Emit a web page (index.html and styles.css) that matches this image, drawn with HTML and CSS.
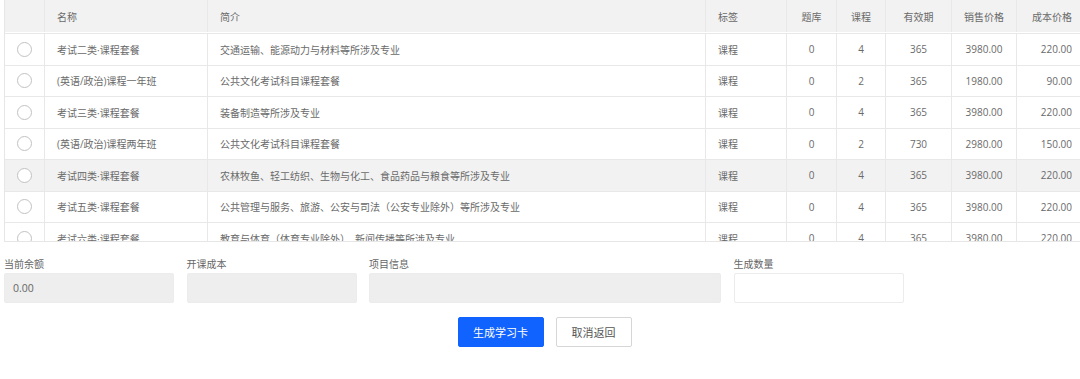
FILE: index.html
```html
<!DOCTYPE html>
<html lang="zh-CN">
<head>
<meta charset="utf-8">
<title>生成学习卡</title>
<link rel="stylesheet" href="styles.css">
</head>
<body>
<div class="page">
  <div class="table">
    <div class="thead">
      <div class="row head">
        <div class="cell"></div>
        <div class="cell">名称</div>
        <div class="cell">简介</div>
        <div class="cell">标签</div>
        <div class="cell c">题库</div>
        <div class="cell c">课程</div>
        <div class="cell c">有效期</div>
        <div class="cell c">销售价格</div>
        <div class="cell r">成本价格</div>
      </div>
    </div>
    <div class="tbody">
      <div class="row">
        <div class="cell c"><span class="radio"></span></div>
        <div class="cell">考试二类·课程套餐</div>
        <div class="cell">交通运输、能源动力与材料等所涉及专业</div>
        <div class="cell">课程</div>
        <div class="cell c">0</div>
        <div class="cell c">4</div>
        <div class="cell c">365</div>
        <div class="cell c">3980.00</div>
        <div class="cell r">220.00</div>
      </div>
      <div class="row">
        <div class="cell c"><span class="radio"></span></div>
        <div class="cell">(英语/政治)课程一年班</div>
        <div class="cell">公共文化考试科目课程套餐</div>
        <div class="cell">课程</div>
        <div class="cell c">0</div>
        <div class="cell c">2</div>
        <div class="cell c">365</div>
        <div class="cell c">1980.00</div>
        <div class="cell r">90.00</div>
      </div>
      <div class="row">
        <div class="cell c"><span class="radio"></span></div>
        <div class="cell">考试三类·课程套餐</div>
        <div class="cell">装备制造等所涉及专业</div>
        <div class="cell">课程</div>
        <div class="cell c">0</div>
        <div class="cell c">4</div>
        <div class="cell c">365</div>
        <div class="cell c">3980.00</div>
        <div class="cell r">220.00</div>
      </div>
      <div class="row">
        <div class="cell c"><span class="radio"></span></div>
        <div class="cell">(英语/政治)课程两年班</div>
        <div class="cell">公共文化考试科目课程套餐</div>
        <div class="cell">课程</div>
        <div class="cell c">0</div>
        <div class="cell c">2</div>
        <div class="cell c">730</div>
        <div class="cell c">2980.00</div>
        <div class="cell r">150.00</div>
      </div>
      <div class="row hover">
        <div class="cell c"><span class="radio"></span></div>
        <div class="cell">考试四类·课程套餐</div>
        <div class="cell">农林牧鱼、轻工纺织、生物与化工、食品药品与粮食等所涉及专业</div>
        <div class="cell">课程</div>
        <div class="cell c">0</div>
        <div class="cell c">4</div>
        <div class="cell c">365</div>
        <div class="cell c">3980.00</div>
        <div class="cell r">220.00</div>
      </div>
      <div class="row">
        <div class="cell c"><span class="radio"></span></div>
        <div class="cell">考试五类·课程套餐</div>
        <div class="cell">公共管理与服务、旅游、公安与司法（公安专业除外）等所涉及专业</div>
        <div class="cell">课程</div>
        <div class="cell c">0</div>
        <div class="cell c">4</div>
        <div class="cell c">365</div>
        <div class="cell c">3980.00</div>
        <div class="cell r">220.00</div>
      </div>
      <div class="row">
        <div class="cell c"><span class="radio"></span></div>
        <div class="cell">考试六类·课程套餐</div>
        <div class="cell">教育与体育（体育专业除外）、新闻传播等所涉及专业</div>
        <div class="cell">课程</div>
        <div class="cell c">0</div>
        <div class="cell c">4</div>
        <div class="cell c">365</div>
        <div class="cell c">3980.00</div>
        <div class="cell r">220.00</div>
      </div>
    </div>
  </div>

  <div class="form">
    <div class="field w1">
      <label class="label">当前余额</label>
      <div class="input disabled">0.00</div>
    </div>
    <div class="field w1">
      <label class="label">开课成本</label>
      <div class="input disabled"></div>
    </div>
    <div class="field w2">
      <label class="label">项目信息</label>
      <div class="input disabled"></div>
    </div>
    <div class="field w1">
      <label class="label">生成数量</label>
      <div class="input"></div>
    </div>
  </div>

  <div class="actions">
    <button class="btn primary">生成学习卡</button>
    <button class="btn">取消返回</button>
  </div>
</div>
</body>
</html>
```

FILE: styles.css
```css
* { box-sizing: border-box; }
html, body { margin: 0; padding: 0; background: #fff; }
body {
  font-family: "Open Sans", "Noto Sans CJK SC", sans-serif;
  font-size: 10px;
  color: #6a6a6a;
  width: 1080px;
  height: 379px;
  overflow: hidden;
}
.page { padding-left: 4px; }

.table {
  border-left: 1px solid #e6e6e6;
  border-bottom: 1px solid #e6e6e6;
}
.row {
  display: grid;
  grid-template-columns: 40px 163px 498px 81px 50px 49px 66px 65px 64px;
  height: 31.5px;
  border-bottom: 1px solid #e8e8e8;
}
.row.head {
  height: 32px;
  background: #f2f2f2;
  border-bottom: none;
}
.thead { border-bottom: 1px solid #fff; }
.tbody {
  height: 208px;
  overflow: hidden;
  border-top: 1px solid #e8e8e8;
}
.row.hover { background: #f2f2f2; }
.cell {
  display: flex;
  align-items: center;
  padding: 0 12px;
  border-right: 1px solid #e8e8e8;
  white-space: nowrap;
  overflow: hidden;
}
.cell:first-child { margin-left: -1px; padding: 0; }
.cell:last-child { border-right: none; }
.cell.c { justify-content: center; padding: 0; }
.cell.r { justify-content: flex-end; padding: 0 9px 0 0; }
.radio {
  display: block;
  width: 15px;
  height: 15px;
  border: 1px solid #c2c2c2;
  border-radius: 50%;
  background: #fff;
}

.form {
  display: flex;
  gap: 12.5px;
  margin-top: 15px;
}
.field { display: flex; flex-direction: column; gap: 2px; }
.field.w1 { width: 170px; }
.field.w2 { width: 352px; }
.label { line-height: 14px; color: #666; }
.input {
  height: 30px;
  border: 1px solid #ececec;
  border-radius: 2px;
  background: #fff;
  padding: 0 8px;
  display: flex;
  align-items: center;
  color: #666;
  font-size: 10.5px;
}
.input.disabled { background: #eeeeee; }

.actions {
  display: flex;
  justify-content: center;
  gap: 12px;
  margin-top: 14px;
  padding-left: 5px;
}
.btn {
  height: 30px;
  padding: 0;
  width: 76px;
  border: 1px solid #d6d6d6;
  border-radius: 2px;
  background: #fff;
  color: #555;
  font-family: "Noto Sans CJK SC", sans-serif;
  font-size: 11px;
}
.btn.primary {
  width: 86px;
  background: #1163ff;
  border-color: #1163ff;
  color: #fff;
}
```
